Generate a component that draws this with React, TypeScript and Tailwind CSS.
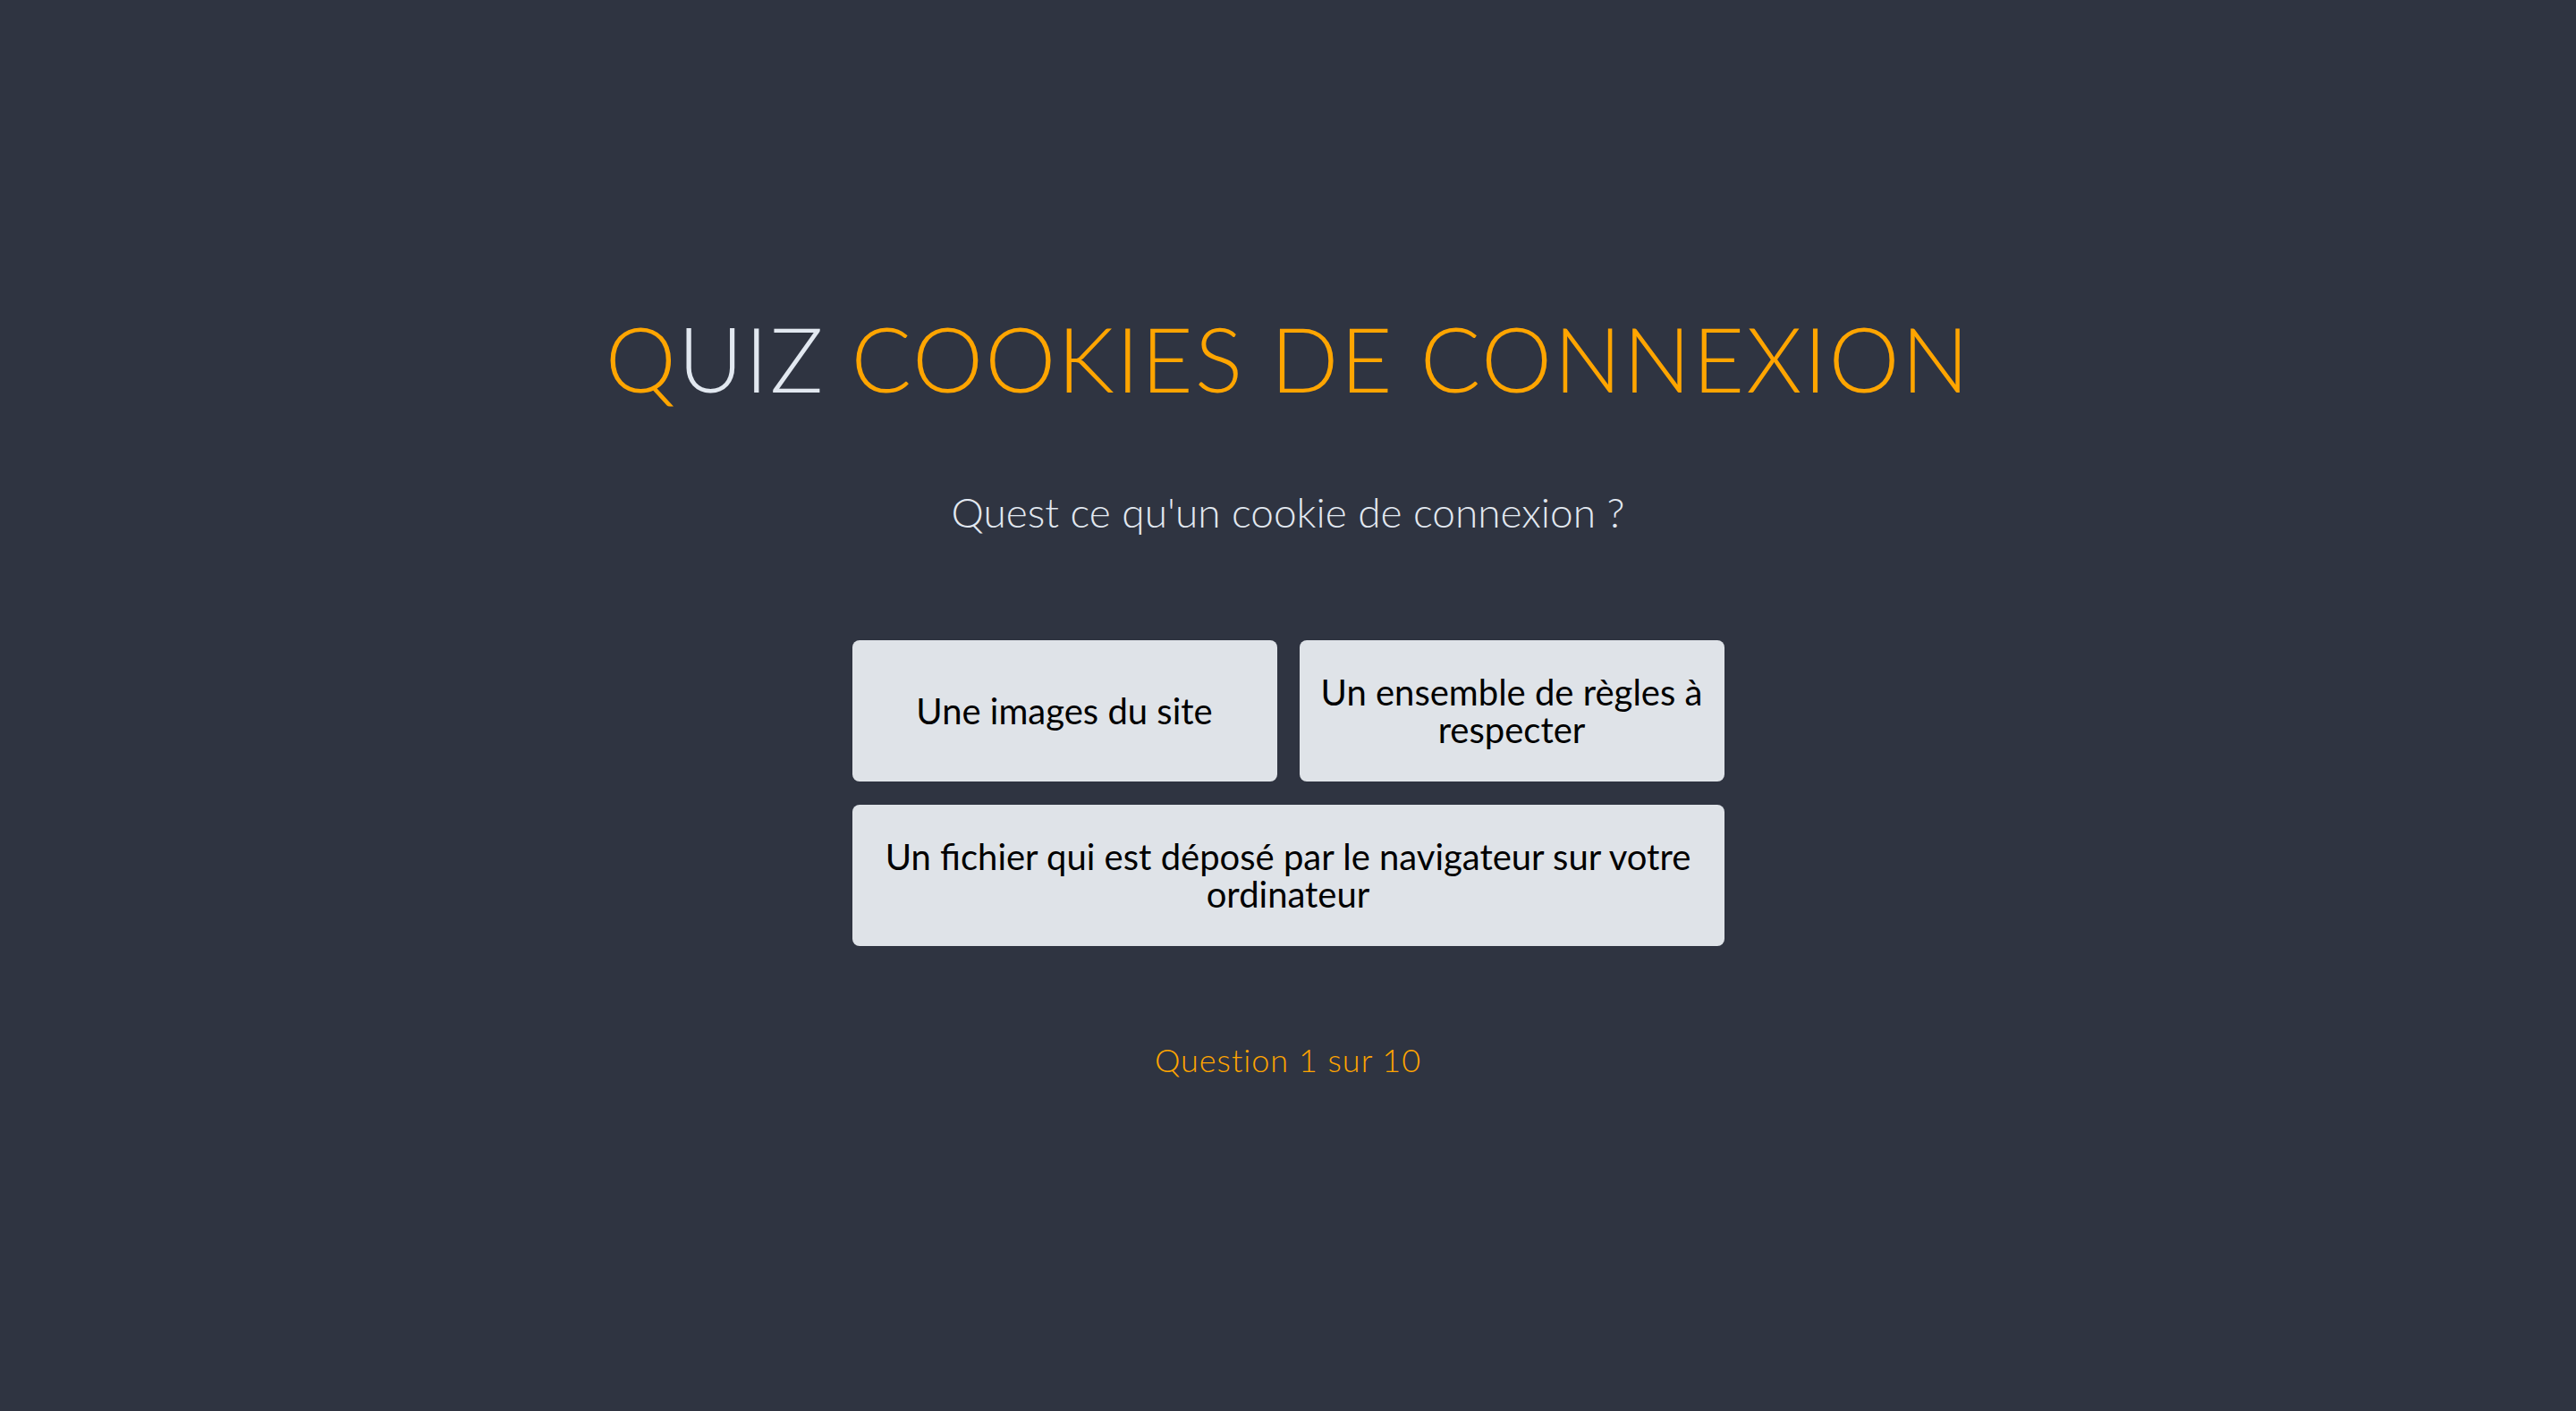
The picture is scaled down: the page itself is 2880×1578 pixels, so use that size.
export default function App() {
  const answers = [
    "Une images du site",
    "Un ensemble de règles à respecter",
  ];

  return (
    <div
      className="min-h-screen w-full bg-[#2f3441] flex flex-col items-center pt-[350px]"
      style={{ fontFamily: "Lato, 'Noto Sans', sans-serif" }}
    >
      <h1 className="text-[100px] leading-none font-light tracking-[2px] text-[#ffa500]">
        Q<span className="text-[#e2e8f0]">UIZ</span> COOKIES DE CONNEXION
      </h1>

      <p className="mt-[100px] text-[46px] leading-none font-light text-[#e2e8f0]">
        Quest ce qu'un cookie de connexion ?
      </p>

      <div className="mt-[120px] grid grid-cols-2 gap-x-[25px] gap-y-[26px] w-[975px]">
        {answers.map((a) => (
          <button
            key={a}
            className="h-[158px] rounded-[8px] bg-[#dfe3e8] px-[14px] text-[40px] leading-[42px] text-black"
          >
            {a}
          </button>
        ))}
        <button className="col-span-2 h-[158px] rounded-[8px] bg-[#dfe3e8] px-[14px] text-[40px] leading-[42px] text-black">
          Un fichier qui est déposé par le navigateur sur votre ordinateur
        </button>
      </div>

      <p className="mt-[109px] text-[36px] leading-none font-light tracking-[1px] text-[#ffa500]">
        Question 1 sur 10
      </p>
    </div>
  );
}
